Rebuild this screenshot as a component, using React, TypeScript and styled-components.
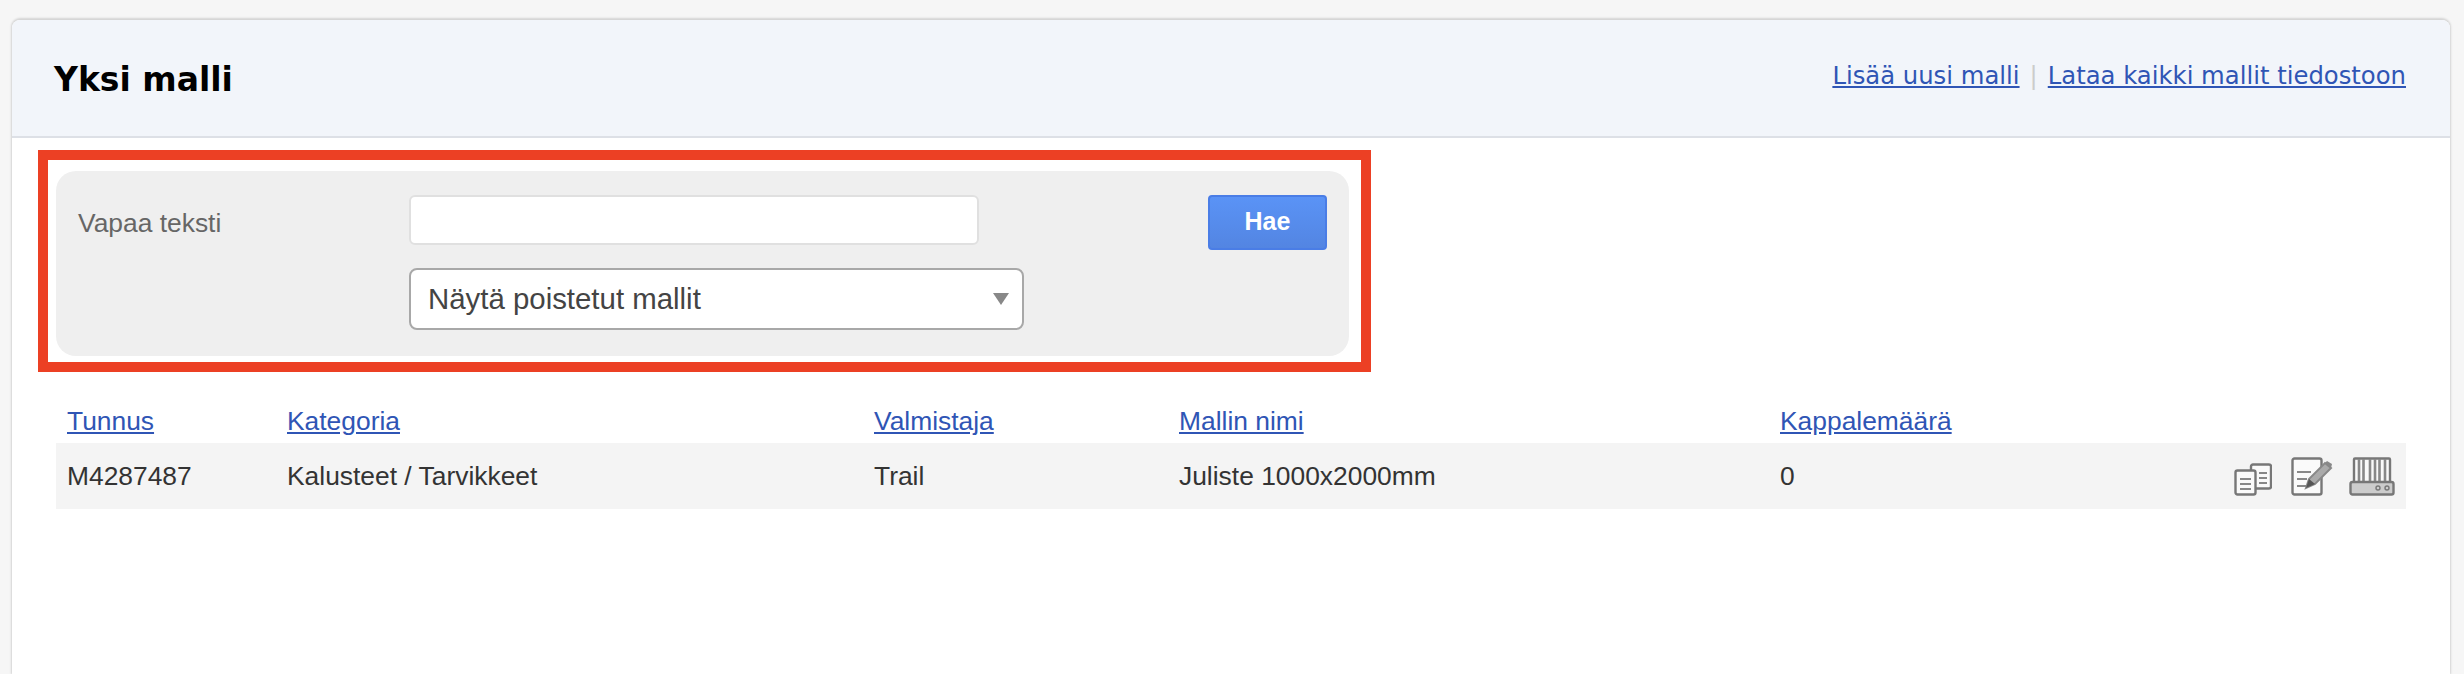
import { createGlobalStyle, styled } from 'styled-components'

const GlobalStyle = createGlobalStyle`
  html, body {
    margin: 0;
    height: 100%;
    overflow: hidden;
    background: #f6f6f6;
  }
`

const Page = styled.div`
  padding: 20px 14px 0 12px;
  height: 674px;
  box-sizing: border-box;
  font-family: "Liberation Sans", Arial, sans-serif;
`

const Card = styled.main`
  height: 100%;
  background: #fff;
  border-radius: 8px 8px 0 0;
  box-shadow: 0 -1px 2px 1px #d4d4d4;
`

const Header = styled.header`
  height: 116px;
  display: flex;
  align-items: center;
  justify-content: space-between;
  padding: 0 44px 0 42px;
  background: #f2f5fa;
  border-bottom: 2px solid #dde0e6;
  border-radius: 8px 8px 0 0;
`

const Title = styled.h1`
  margin: 2px 0 0;
  font: bold 33px "DejaVu Sans", sans-serif;
  color: #000;
`

const HeaderLinks = styled.nav`
  display: flex;
  align-items: center;
  font: 24.3px "DejaVu Sans", sans-serif;
  margin-bottom: 5px;
`

const Link = styled.a`
  color: #2f55b5;
  text-decoration: underline;
  cursor: pointer;
`

const Divider = styled.span`
  color: #ccc;
  margin: 0 10px;
`

const Highlight = styled.div`
  width: fit-content;
  margin: 12px 0 0 26px;
  padding: 11px 12px 6px 8px;
  border: 10px solid #ec4024;
`

const SearchPanel = styled.form`
  width: 1293px;
  height: 185px;
  box-sizing: border-box;
  padding: 24px 22px;
  display: grid;
  grid-template-columns: 331px 1fr 119px;
  grid-template-rows: 50px 62px;
  row-gap: 23px;
  background: #efefef;
  border-radius: 20px;
`

const Label = styled.label`
  font-size: 26.4px;
  line-height: 56px;
  color: #666;
`

const TextInput = styled.input`
  grid-column: 2;
  width: 570px;
  height: 50px;
  box-sizing: border-box;
  background: #fff;
  border: 2px solid #e0e0e0;
  border-radius: 6px;
`

const SearchButton = styled.button`
  grid-column: 3;
  height: 55px;
  padding-bottom: 4px;
  background: linear-gradient(#5a93f6, #5385e2);
  border: 2px solid #4a7de6;
  border-radius: 4px;
  color: #fff;
  font: bold 25px "Liberation Sans", Arial, sans-serif;
`

const SelectBox = styled.div`
  grid-column: 2;
  grid-row: 2;
  width: 615px;
  height: 62px;
  box-sizing: border-box;
  padding: 0 13px 0 17px;
  display: flex;
  align-items: center;
  justify-content: space-between;
  background: #fff;
  border: 2px solid #a8a8a8;
  border-radius: 8px;
  font-size: 29.4px;
  color: #444;
`

const Caret = styled.span`
  width: 0;
  height: 0;
  border-left: 8px solid transparent;
  border-right: 8px solid transparent;
  border-top: 12px solid #888;
`

const Table = styled.section`
  margin: 34px 44px 0;
`

const gridColumns = '220px 587px 305px 601px 1fr'

const HeadRow = styled.div`
  display: grid;
  grid-template-columns: ${gridColumns};
  height: 37px;
  padding-left: 11px;
  font-size: 26.4px;
`

const DataRow = styled.div`
  display: grid;
  grid-template-columns: ${gridColumns};
  align-items: center;
  height: 66px;
  padding-left: 11px;
  background: #f4f4f4;
  font-size: 26.4px;
  color: #333;
`

const Actions = styled.div`
  grid-column: 6;
  display: flex;
  align-items: flex-end;
  gap: 15px;
  padding: 14px 11px 13px 0;
  margin-left: auto;
  filter: blur(0.5px);
`

const CopySvg = styled.svg`
  margin-right: 4px;
`

const CopyIcon = () => (
  <CopySvg width="38" height="33" viewBox="0 0 38 33" fill="none" stroke="#777" strokeWidth="2.4">
    <rect x="17" y="1.5" width="20" height="24" rx="2" fill="#fafafa" />
    <rect x="1.5" y="7.5" width="20" height="24" rx="2" fill="#fafafa" />
    <path d="M6 16h11M6 21h11M6 26h11M25 10h8M25 15h8M25 20h8" strokeWidth="2" stroke="#888" />
  </CopySvg>
)

const EditIcon = () => (
  <svg width="43" height="39" viewBox="0 0 43 39" fill="none" stroke="#777" strokeWidth="2.4">
    <rect x="1.5" y="1.5" width="29" height="36" rx="2" fill="#fafafa" />
    <path d="M6 15h14M6 22h10M6 29h9" strokeWidth="2" stroke="#888" />
    <path d="M15 31l3-9L34 6l6 5-16 16z" fill="#aaa" stroke="#888" strokeWidth="2" />
    <path d="M15 31l3-9 6 5z" fill="#555" stroke="none" />
    <path d="M34 6l2-2 5 3-1 4z" fill="#888" stroke="none" />
  </svg>
)

const BarcodeIcon = () => (
  <svg width="46" height="39" viewBox="0 0 46 39" fill="none" stroke="#777" strokeWidth="2.4">
    <rect x="5" y="1.5" width="36" height="25" rx="1" fill="#fafafa" />
    <path d="M10 2v24M14.5 2v24M21 2v24M26 2v24M30.5 2v24M36 2v24" strokeWidth="2.6" stroke="#888" />
    <rect x="1.5" y="25" width="43" height="12.5" rx="2" fill="#ccc" />
    <circle cx="29" cy="31" r="2" strokeWidth="1.4" />
    <circle cx="38" cy="31" r="2" strokeWidth="1.4" />
  </svg>
)

const App = () => {
  return (
    <Page>
      <GlobalStyle />
      <Card>
        <Header>
          <Title>Yksi malli</Title>
          <HeaderLinks>
            <Link>Lisää uusi malli</Link>
            <Divider>|</Divider>
            <Link>Lataa kaikki mallit tiedostoon</Link>
          </HeaderLinks>
        </Header>
        <Highlight>
          <SearchPanel>
            <Label>Vapaa teksti</Label>
            <TextInput />
            <SearchButton type="button">Hae</SearchButton>
            <SelectBox>
              Näytä poistetut mallit
              <Caret />
            </SelectBox>
          </SearchPanel>
        </Highlight>
        <Table>
          <HeadRow>
            <div><Link>Tunnus</Link></div>
            <div><Link>Kategoria</Link></div>
            <div><Link>Valmistaja</Link></div>
            <div><Link>Mallin nimi</Link></div>
            <div><Link>Kappalemäärä</Link></div>
          </HeadRow>
          <DataRow>
            <div>M4287487</div>
            <div>Kalusteet / Tarvikkeet</div>
            <div>Trail</div>
            <div>Juliste 1000x2000mm</div>
            <div>0</div>
            <Actions>
              <CopyIcon />
              <EditIcon />
              <BarcodeIcon />
            </Actions>
          </DataRow>
        </Table>
      </Card>
    </Page>
  )
}

export default App
